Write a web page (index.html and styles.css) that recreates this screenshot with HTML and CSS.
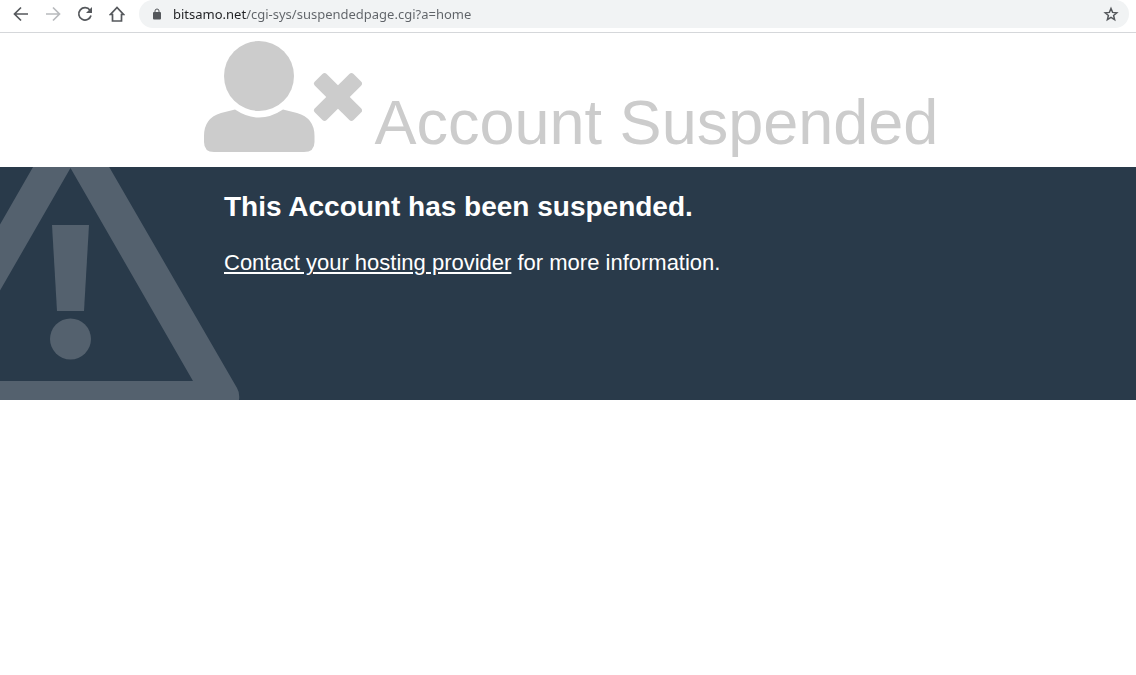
FILE: index.html
```html
<!DOCTYPE html>
<html lang="en">
<head>
	<meta charset="utf-8">
	<meta name="viewport" content="width=device-width, initial-scale=1">
	<title>Account Suspended</title>
	<link rel="stylesheet" href="styles.css">
</head>
<body>
<nav class="toolbar">
	<button type="button" class="tool" aria-label="Back">
		<svg viewBox="0 0 16 16"><path d="M15 8H2M8 1.500L1.500 8 8 14.500"/></svg>
	</button>
	<button type="button" class="tool" aria-label="Forward" disabled>
		<svg viewBox="0 0 16 16"><path d="M1 8h13M8 1.500L14.500 8 8 14.500"/></svg>
	</button>
	<button type="button" class="tool" aria-label="Reload">
		<svg viewBox="0 0 16 16"><path d="M13 4.200A6.200 6.200 0 1 0 14 9.500"/><path class="solid" d="M15 1v6H9z"/></svg>
	</button>
	<button type="button" class="tool" aria-label="Home">
		<svg viewBox="0 0 16 16"><path d="M1.500 8.500H3.500V15h9V8.500h2L8 1.500z"/></svg>
	</button>
	<form class="address">
		<svg class="lock" viewBox="0 0 10 12"><rect x="1" y="4" width="8" height="7.500" rx="1"/><path d="M3 5V3a2 2 0 0 1 4 0v2"/></svg>
		<input type="text" class="url" aria-label="Address" value="bitsamo.net/cgi-sys/suspendedpage.cgi?a=home">
		<button type="button" class="star" aria-label="Bookmark this page">
			<svg viewBox="0 0 16 16"><path d="M8 2.500l1.600 3.900 4.200.4-3.200 2.700 1 4.100L8 11.400l-3.600 2.200 1-4.100-3.200-2.700 4.200-.4z"/></svg>
		</button>
	</form>
</nav>

<header class="heading">
	<svg class="user-icon" viewBox="0 0 158 111">
		<circle cx="55" cy="35" r="35"/>
		<path d="M31 68.500Q55 84.500 79 68.500L93 72Q110.500 77 110.500 95V101Q110.500 111 100 111H10Q0 111 0 101V95Q0 77 17 72Z"/>
		<g transform="translate(134 56) rotate(45)">
			<rect x="-27.300" y="-8.300" width="54.600" height="16.600" rx="3"/>
			<rect x="-8.300" y="-27.300" width="16.600" height="54.600" rx="3"/>
		</g>
	</svg>
	<h1>Account Suspended</h1>
</header>

<main class="info">
	<svg class="warning" viewBox="0 0 240 233">
		<path fill-rule="evenodd" d="M71 -66L237 221Q240 226 239 233H-97V226Z M70.500 1L-52 214H193Z"/>
		<path d="M52 58h37l-5 86H57z"/>
		<circle cx="70.500" cy="172" r="20.500"/>
	</svg>
	<h2>This Account has been suspended.</h2>
	<p><a href="#">Contact your hosting provider</a> for more information.</p>
</main>
</body>
</html>
```
FILE: styles.css
```css
body {
	margin: 0;
	font-family: "Liberation Sans", Arial, sans-serif;
	color: #cccccc;
	background-color: #ffffff;
}
button {
	padding: 0;
	border: 0;
	background: none;
}
svg { display: block; }

/* browser bar */
.toolbar {
	display: flex;
	align-items: center;
	gap: 16px;
	height: 32px;
	padding: 0 7px 0 13px;
	border-bottom: 1px solid #d5d7da;
}
.tool {
	flex: none;
	width: 16px;
	height: 16px;
	margin-bottom: 4px;
}
.tool svg, .star svg {
	width: 16px;
	height: 16px;
	fill: none;
	stroke: #55585c;
	stroke-width: 1.7;
}
.tool:disabled svg { stroke: #b8babd; }
.tool .solid {
	fill: #55585c;
	stroke: none;
}
.address {
	display: flex;
	flex: 1;
	align-items: center;
	height: 28px;
	margin: 0 0 4px -2px;
	padding: 0 10px 0 13px;
	border-radius: 14px;
	background-color: #f1f3f4;
}
.lock {
	width: 10px;
	height: 12px;
	margin-right: 11px;
	fill: #55585c;
}
.lock path {
	fill: none;
	stroke: #55585c;
}
/* host name is darker than the rest of the address */
.url {
	flex: 1;
	min-width: 0;
	padding: 0;
	border: 0;
	outline: 0;
	font: 13px/20px "Noto Sans", "Open Sans", sans-serif;
	color: transparent;
	background: linear-gradient(90deg, #202124 74px, #5f6368 74px);
	-webkit-background-clip: text;
	background-clip: text;
}
.star svg { stroke-width: 1.5; }

/* page */
.heading {
	display: flex;
	align-items: flex-end;
	gap: 12px;
	padding: 8px 18% 15px;
}
.user-icon {
	flex: none;
	width: 158px;
	height: 111px;
	fill: #cccccc;
}
h1 {
	margin: 0;
	font-size: 63px;
	line-height: 60px;
	font-weight: normal;
	white-space: nowrap;
}
.info {
	position: relative;
	min-height: 209px;
	padding: 24px 20px 0 224px;
	color: #ffffff;
	background-color: #293a4a;
}
.warning {
	position: absolute;
	top: 0;
	left: 0;
	width: 240px;
	height: 233px;
	fill: #54616e;
}
h2 {
	margin: 0 0 24px;
	font-size: 28px;
	line-height: 32px;
}
p {
	margin: 0;
	font-size: 22px;
	line-height: 32px;
}
a { color: #ffffff; }
```
